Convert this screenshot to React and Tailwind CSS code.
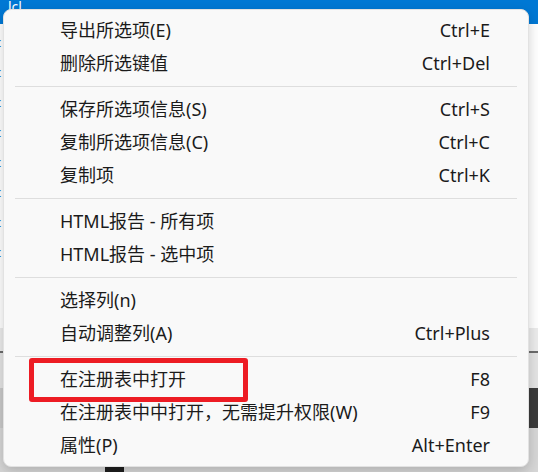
import React from "react";

const font = {
  fontFamily: '"Noto Sans", "Noto Sans CJK SC", sans-serif',
};

const groups = [
  [
    { label: "导出所选项(E)", key: "Ctrl+E" },
    { label: "删除所选键值", key: "Ctrl+Del" },
  ],
  [
    { label: "保存所选项信息(S)", key: "Ctrl+S" },
    { label: "复制所选项信息(C)", key: "Ctrl+C" },
    { label: "复制项", key: "Ctrl+K" },
  ],
  [
    { label: "HTML报告 - 所有项", key: "" },
    { label: "HTML报告 - 选中项", key: "" },
  ],
  [
    { label: "选择列(n)", key: "" },
    { label: "自动调整列(A)", key: "Ctrl+Plus" },
  ],
  [
    { label: "在注册表中打开", key: "F8" },
    { label: "在注册表中中打开，无需提升权限(W)", key: "F9" },
    { label: "属性(P)", key: "Alt+Enter" },
  ],
];

const MenuRow = ({ label, shortcut }) => (
  <div className="flex h-[33px] items-center justify-between pl-[56px] pr-[38px] text-[18px] text-[#1b1b1b]">
    <span>{label}</span>
    <span>{shortcut}</span>
  </div>
);

const Background = () => (
  <div className="flex h-full flex-col">
    <div className="flex h-[24px] items-start bg-[#0078d4] pl-[8px] text-[14px] leading-[14px] text-white">
      lcl
    </div>
    <div className="flex h-[304px] flex-col bg-white pt-[12px] text-[13px] leading-[13px] text-[#1f6fc4]">
      {[43, 77, 108, 137, 170, 192, 235, 265].map((y, i) => (
        <span key={i} className="-ml-[5px] h-[30px]">
          c
        </span>
      ))}
    </div>
    <div className="h-[25px] border-b-2 border-[#6b6b6b] bg-[#ebebeb]" />
    <div className="h-[35px] bg-[#e3e3e3]" />
    <div className="flex h-[40px]">
      <div className="w-[100px] bg-[#c9c9c9]" />
      <div className="flex-1 bg-[#3b3b3b]" />
    </div>
    <div className="flex flex-1 items-end bg-[#d6d6d6]">
      <div className="ml-[105px] h-[8px] w-[19px] bg-[#1e1e1e]" />
    </div>
  </div>
);

export default function App() {
  return (
    <div
      className="relative h-[472px] w-[538px] overflow-hidden bg-white"
      style={font}
    >
      <Background />

      <div className="absolute left-[3px] top-[9px] h-[458px] w-[526px] rounded-[8px] border border-[#e2e2e2] bg-[#f9f9f9] pt-[4px] shadow-[0_4px_12px_rgba(0,0,0,0.18)]">
        {groups.map((group, gi) => (
          <div key={gi}>
            {gi > 0 && (
              <div className="flex h-[13px] items-center px-[11px]">
                <div className="h-px w-full bg-[#dedede]" />
              </div>
            )}
            {group.map((item) => (
              <MenuRow key={item.label} label={item.label} shortcut={item.key} />
            ))}
          </div>
        ))}
      </div>

      <div className="absolute left-[29px] top-[358px] h-[44px] w-[219px] rounded-[3px] border-[5px] border-[#ed1c24]" />
    </div>
  );
}
